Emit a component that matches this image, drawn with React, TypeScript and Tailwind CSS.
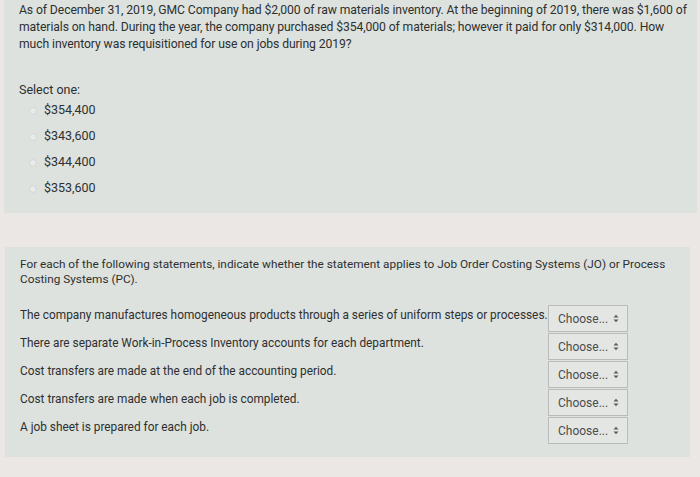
import React from "react";

const options = ["$354,400", "$343,600", "$344,400", "$353,600"];

const statements = [
  "The company manufactures homogeneous products through a series of uniform steps or processes.",
  "There are separate Work-in-Process Inventory accounts for each department.",
  "Cost transfers are made at the end of the accounting period.",
  "Cost transfers are made when each job is completed.",
  "A job sheet is prepared for each job.",
];

const Choose: React.FC = () => (
  <div className="w-[80px] h-[27px] flex items-center justify-between pl-[9px] pr-[8px] bg-[#e4e6e4] border border-[#b9bcba] text-[12px] text-[#4a4d4c]">
    <span>Choose...</span>
    <svg width="6" height="9" viewBox="0 0 6 9">
      <path d="M0.5 3.5 L3 0.8 L5.5 3.5 Z M0.5 5.5 L3 8.2 L5.5 5.5 Z" fill="#5a5d5c" />
    </svg>
  </div>
);

export default function App() {
  return (
    <div
      className="w-[700px] h-[477px] bg-[#ebe7e4] text-[#2e302f] overflow-hidden"
      style={{ fontFamily: "Roboto, Arial, sans-serif" }}
    >
      {/* question one */}
      <div className="ml-[4px] w-[693px] h-[213px] bg-[#dde2df] pl-[15px] pr-[4px] pt-[2px]">
        <p className="text-[12.2px] leading-[17px] whitespace-nowrap tracking-[-0.1px]">
          As of December 31, 2019, GMC Company had $2,000 of raw materials inventory. At the beginning of 2019, there was $1,600 of
          <br />
          materials on hand. During the year, the company purchased $354,000 of materials; however it paid for only $314,000. How
          <br />
          much inventory was requisitioned for use on jobs during 2019?
        </p>
        <p className="mt-[28px] text-[12.5px] leading-[17px]">Select one:</p>
        <div className="mt-[4px] flex flex-col gap-[9px]">
          {options.map((o) => (
            <div key={o} className="flex items-center h-[17px] pl-[10px]">
              <span className="w-[8px] h-[8px] rounded-full bg-[#e8ebe9] border border-[#d3d7d5]" />
              <span className="ml-[7px] text-[12.5px]">{o}</span>
            </div>
          ))}
        </div>
      </div>

      {/* question two */}
      <div className="mt-[34px] ml-[5px] w-[685px] h-[210px] bg-[#dde2df] pl-[15px] pr-[4px] pt-[10px]">
        <p className="text-[11.8px] leading-[15px] whitespace-nowrap">
          For each of the following statements, indicate whether the statement applies to Job Order Costing Systems (JO) or Process
          <br />
          Costing Systems (PC).
        </p>
        <div className="mt-[18px] flex flex-col gap-[1px]">
          {statements.map((s) => (
            <div key={s} className="flex items-start">
              <span className="w-[528px] text-[11.85px] leading-[16px] pt-[2px] whitespace-nowrap">{s}</span>
              <Choose />
            </div>
          ))}
        </div>
      </div>
    </div>
  );
}
